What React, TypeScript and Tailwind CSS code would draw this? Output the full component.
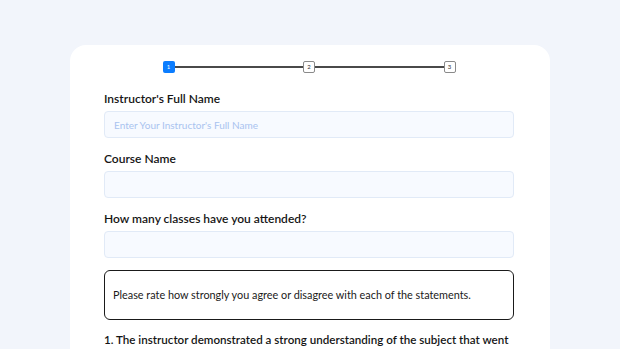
import React from 'react';

function Step({ n, active }: { n: number; active?: boolean }) {
  return (
    <div
      className={`w-[12px] h-[12px] shrink-0 flex items-center justify-center rounded-[2px] text-[6px] leading-none ${
        active ? 'bg-[#0b7dff] text-white' : 'bg-white border border-[#8a8a8a] text-[#333]'
      }`}
    >
      {n}
    </div>
  );
}

function Field({ label, placeholder }: { label: string; placeholder?: string }) {
  return (
    <div className="flex flex-col">
      <label className="text-[12px] leading-[16px] font-semibold text-[#151515] mb-[4px]">{label}</label>
      <input
        placeholder={placeholder}
        className="h-[27px] w-full rounded-[4px] border border-[#e1eaf7] bg-[#f7faff] px-[9px] text-[10px] outline-none placeholder:text-[#a9c3ef]"
      />
    </div>
  );
}

export default function App() {
  return (
    <div className="h-[349px] bg-[#f2f5fb] pt-[45px] font-['Lato',sans-serif] overflow-hidden">
      <div className="mx-auto w-[480px] bg-white rounded-t-[16px] pl-[34px] pr-[36px] pt-[16px] pb-8">
        <div className="mx-auto w-[293px] flex items-center">
          <Step n={1} active />
          <div className="flex-1 h-[2px] bg-[#4a4a4a]" />
          <Step n={2} />
          <div className="flex-1 h-[2px] bg-[#4a4a4a]" />
          <Step n={3} />
        </div>

        <div className="mt-[18px] flex flex-col gap-[13px]">
          <Field label="Instructor's Full Name" placeholder="Enter Your Instructor's Full Name" />
          <Field label="Course Name" />
          <Field label="How many classes have you attended?" />
        </div>

        <div className="mt-[12px] h-[50px] rounded-[6px] border border-[#1a1a1a] flex items-center px-[8px]">
          <p className="text-[10.85px] text-[#1a1a1a]">
            Please rate how strongly you agree or disagree with each of the statements.
          </p>
        </div>

        <p className="mt-[12px] text-[11.6px] leading-[16px] font-semibold text-[#151515]">
          1. The instructor demonstrated a strong understanding of the subject that went beyond the course material.
        </p>
      </div>
    </div>
  );
}
